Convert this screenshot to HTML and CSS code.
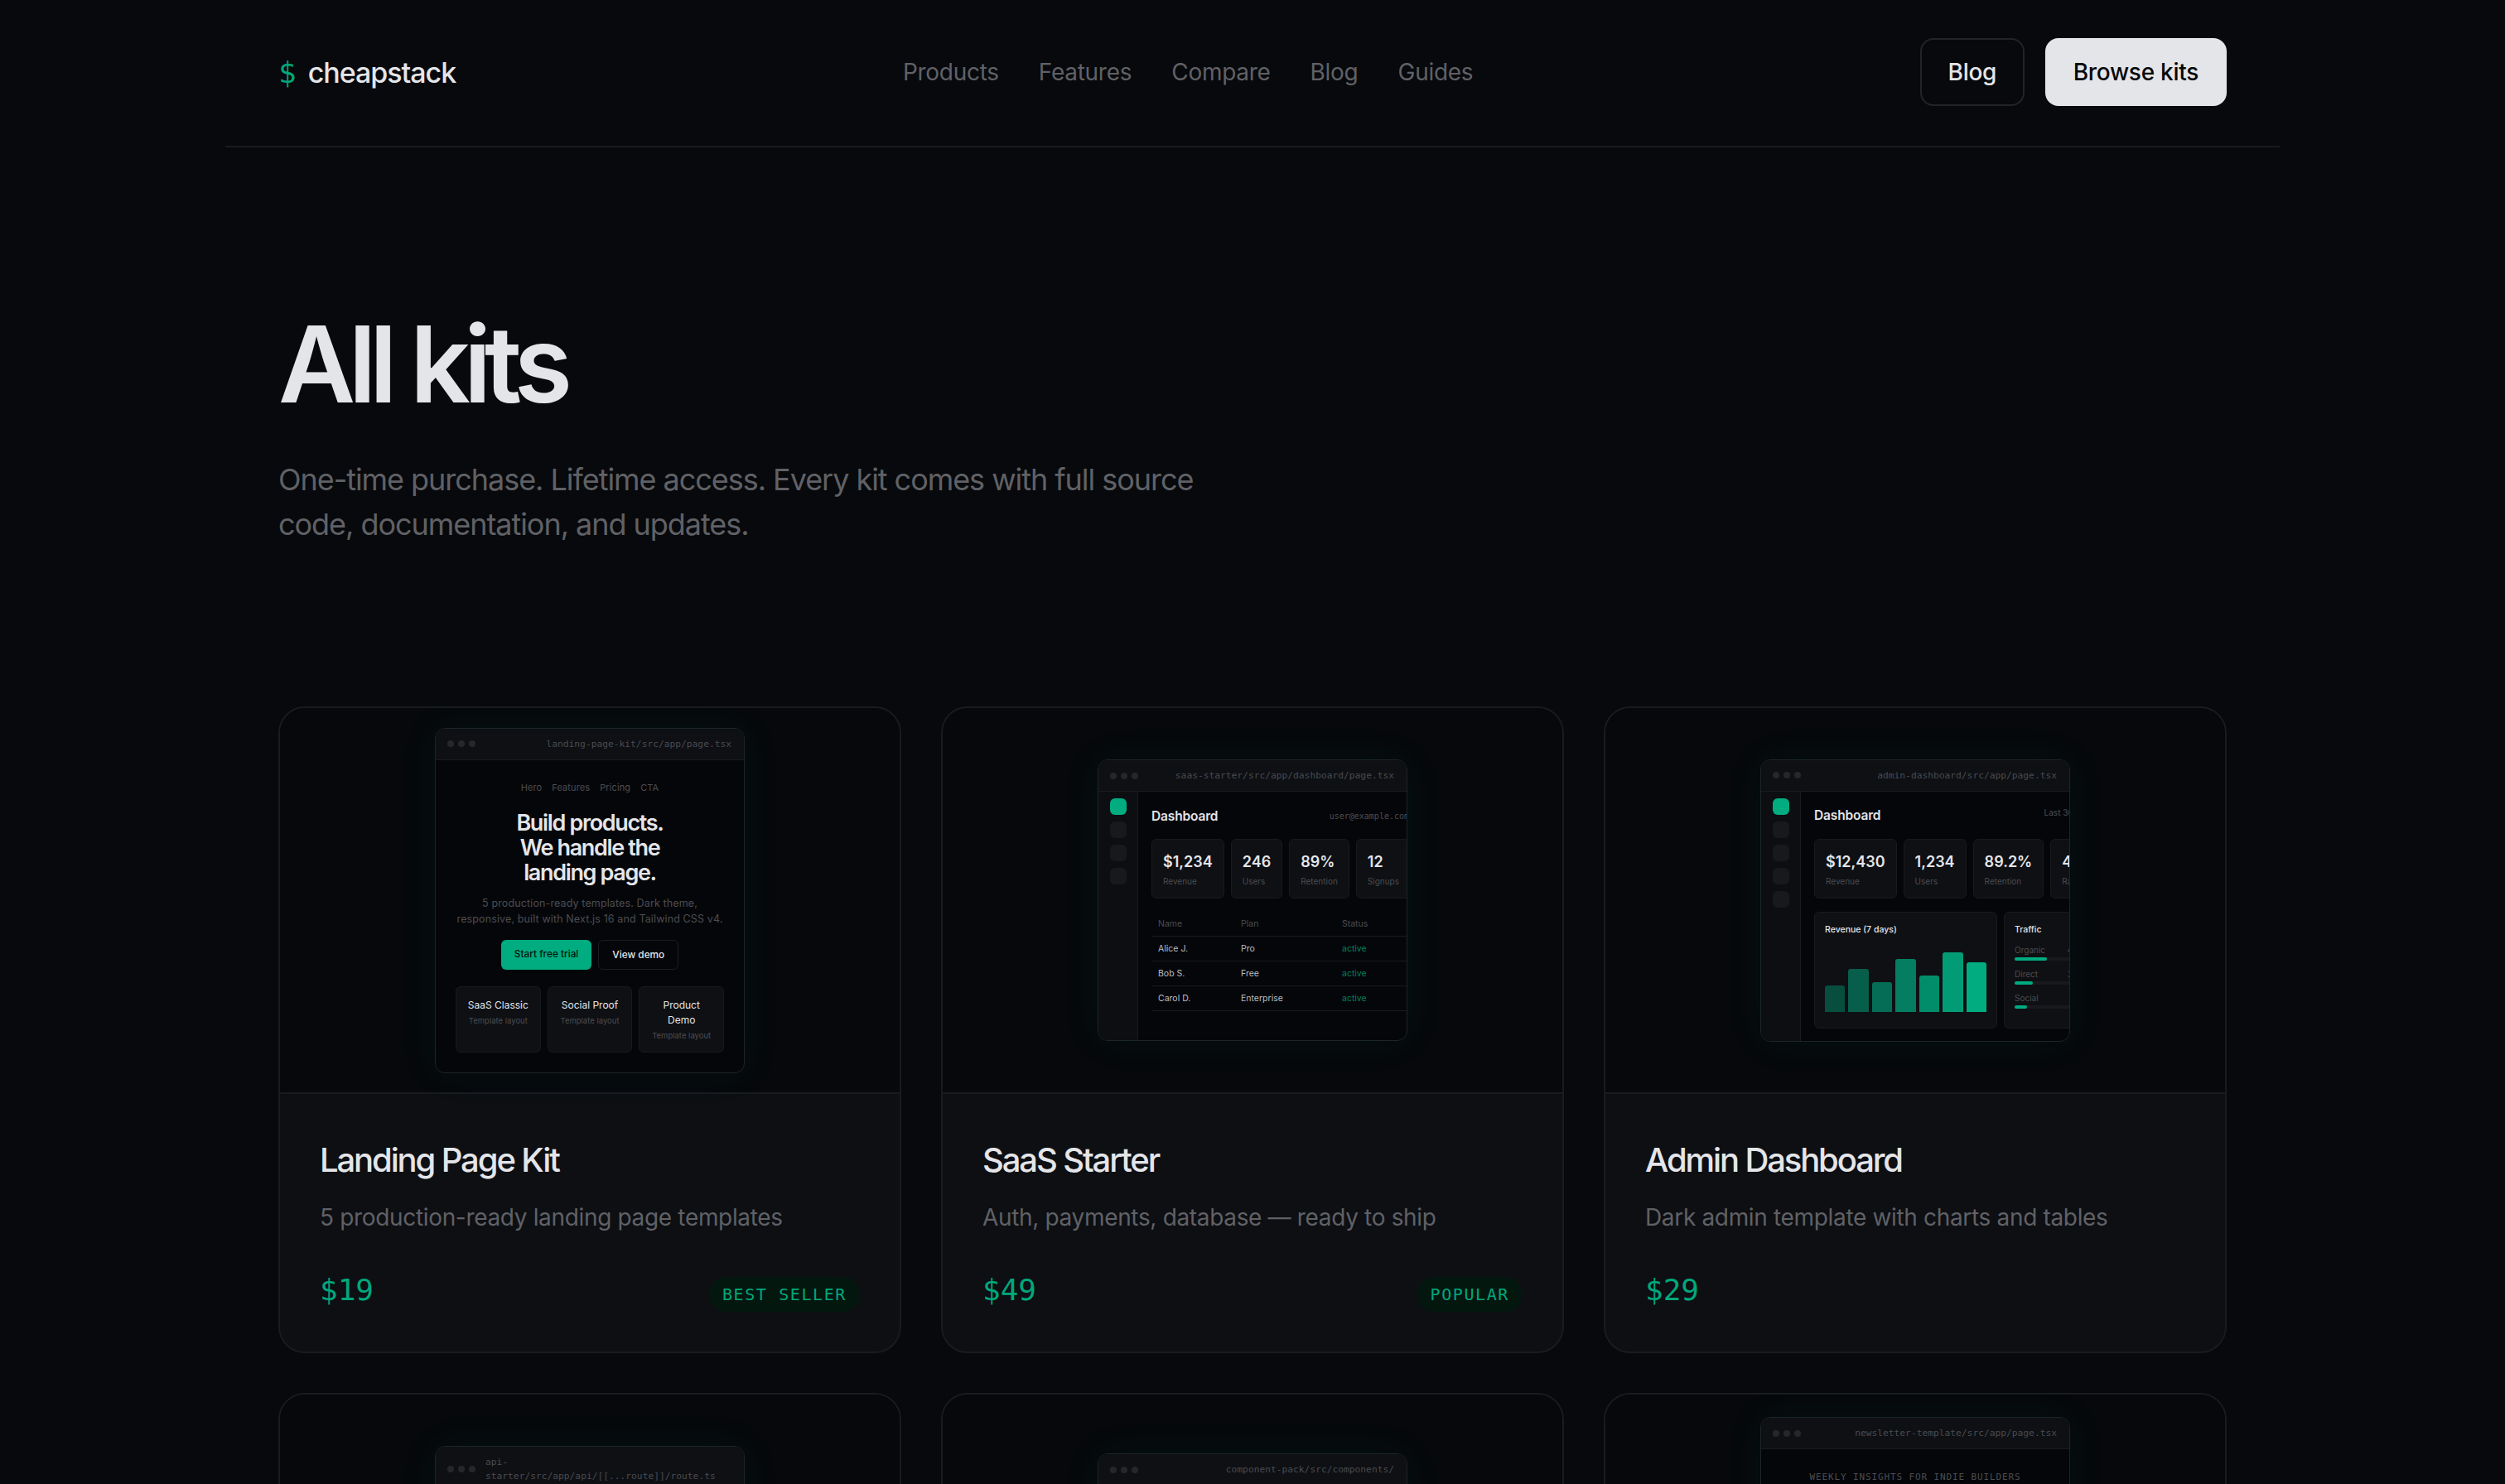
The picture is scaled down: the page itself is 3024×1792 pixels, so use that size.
FILE: index.html
```html
<!DOCTYPE html>
<html lang="en">
   <head>
      <meta charset="UTF-8">
      <title>All kits - cheapstack</title>
      <link rel="stylesheet" href="styles.css">
   </head>
   <body>
      <div class="wrap">
         <header class="top">
            <a class="logo" href="#"><span class="dollar">$</span><span>cheapstack</span></a>
            <nav class="nav">
               <a href="#">Products</a>
               <a href="#">Features</a>
               <a href="#">Compare</a>
               <a href="#">Blog</a>
               <a href="#">Guides</a>
            </nav>
            <div class="actions">
               <a class="btn ghost" href="#">Blog</a>
               <a class="btn solid" href="#">Browse kits</a>
            </div>
         </header>
         <main class="page">
            <h1>All kits</h1>
            <p class="lead">One-time purchase. Lifetime access. Every kit comes with full source code, documentation, and updates.</p>
            <div class="grid">

               <article class="card">
                  <div class="preview">
                     <div class="win">
                        <div class="bar"><div class="dots"><i></i><i></i><i></i></div><span class="path">landing-page-kit/src/app/page.tsx</span></div>
                        <div class="land">
                           <div class="land-nav"><span>Hero</span><span>Features</span><span>Pricing</span><span>CTA</span></div>
                           <div class="land-title">Build products.<br>We handle the<br>landing page.</div>
                           <div class="land-sub">5 production-ready templates. Dark theme, responsive, built with Next.js 16 and Tailwind CSS v4.</div>
                           <div class="land-btns"><span class="mini green">Start free trial</span><span class="mini line">View demo</span></div>
                           <div class="land-cards">
                              <div class="tpl"><b>SaaS Classic</b><small>Template layout</small></div>
                              <div class="tpl"><b>Social Proof</b><small>Template layout</small></div>
                              <div class="tpl"><b>Product Demo</b><small>Template layout</small></div>
                           </div>
                        </div>
                     </div>
                  </div>
                  <div class="info">
                     <h2>Landing Page Kit</h2>
                     <p class="desc">5 production-ready landing page templates</p>
                     <div class="foot"><span class="price">$19</span><span class="badge">BEST SELLER</span></div>
                  </div>
               </article>

               <article class="card">
                  <div class="preview">
                     <div class="win">
                        <div class="bar"><div class="dots"><i></i><i></i><i></i></div><span class="path">saas-starter/src/app/dashboard/page.tsx</span></div>
                        <div class="app saas">
                           <div class="side"><i class="on"></i><i></i><i></i><i></i></div>
                           <div class="main">
                              <div class="main-top"><b>Dashboard</b><span class="user">user@example.com</span></div>
                              <div class="stats">
                                 <div class="stat"><b>$1,234</b><small>Revenue</small></div>
                                 <div class="stat"><b>246</b><small>Users</small></div>
                                 <div class="stat"><b>89%</b><small>Retention</small></div>
                                 <div class="stat"><b>12</b><small>Signups</small></div>
                              </div>
                              <div class="table">
                                 <div class="tr th"><span>Name</span><span>Plan</span><span>Status</span></div>
                                 <div class="tr"><span>Alice J.</span><span>Pro</span><span class="ok">active</span></div>
                                 <div class="tr"><span>Bob S.</span><span>Free</span><span class="ok">active</span></div>
                                 <div class="tr"><span>Carol D.</span><span>Enterprise</span><span class="ok">active</span></div>
                              </div>
                           </div>
                        </div>
                     </div>
                  </div>
                  <div class="info">
                     <h2>SaaS Starter</h2>
                     <p class="desc">Auth, payments, database — ready to ship</p>
                     <div class="foot"><span class="price">$49</span><span class="badge">POPULAR</span></div>
                  </div>
               </article>

               <article class="card">
                  <div class="preview">
                     <div class="win">
                        <div class="bar"><div class="dots"><i></i><i></i><i></i></div><span class="path">admin-dashboard/src/app/page.tsx</span></div>
                        <div class="app admin">
                           <div class="side"><i class="on"></i><i></i><i></i><i></i><i></i></div>
                           <div class="main">
                              <div class="main-top"><b>Dashboard</b><span class="last">Last 30 days</span></div>
                              <div class="stats">
                                 <div class="stat"><b>$12,430</b><small>Revenue</small></div>
                                 <div class="stat"><b>1,234</b><small>Users</small></div>
                                 <div class="stat"><b>89.2%</b><small>Retention</small></div>
                                 <div class="stat"><b>4.9</b><small>Rating</small></div>
                              </div>
                              <div class="panels">
                                 <div class="panel chart">
                                    <div class="panel-title">Revenue (7 days)</div>
                                    <div class="bars">
                                       <i style="height:32px;opacity:.4"></i>
                                       <i style="height:52px;opacity:.5"></i>
                                       <i style="height:36px;opacity:.6"></i>
                                       <i style="height:64px;opacity:.7"></i>
                                       <i style="height:44px;opacity:.8"></i>
                                       <i style="height:72px;opacity:.9"></i>
                                       <i style="height:60px;opacity:1"></i>
                                    </div>
                                 </div>
                                 <div class="panel traffic">
                                    <div class="panel-title">Traffic</div>
                                    <div class="src"><div class="src-row"><span>Organic</span><span>45%</span></div><div class="track"><i style="width:45%"></i></div></div>
                                    <div class="src"><div class="src-row"><span>Direct</span><span>25%</span></div><div class="track"><i style="width:25%"></i></div></div>
                                    <div class="src"><div class="src-row"><span>Social</span><span>18%</span></div><div class="track"><i style="width:18%"></i></div></div>
                                 </div>
                              </div>
                           </div>
                        </div>
                     </div>
                  </div>
                  <div class="info">
                     <h2>Admin Dashboard</h2>
                     <p class="desc">Dark admin template with charts and tables</p>
                     <div class="foot"><span class="price">$29</span></div>
                  </div>
               </article>

               <article class="card">
                  <div class="preview">
                     <div class="win tall-340">
                        <div class="bar"><div class="dots"><i></i><i></i><i></i></div><span class="path">api-starter/src/app/api/[[...route]]/route.ts</span></div>
                     </div>
                  </div>
               </article>

               <article class="card">
                  <div class="preview">
                     <div class="win tall-322">
                        <div class="bar"><div class="dots"><i></i><i></i><i></i></div><span class="path">component-pack/src/components/</span></div>
                     </div>
                  </div>
               </article>

               <article class="card">
                  <div class="preview">
                     <div class="win tall-410">
                        <div class="bar"><div class="dots"><i></i><i></i><i></i></div><span class="path">newsletter-template/src/app/page.tsx</span></div>
                        <div class="news">WEEKLY INSIGHTS FOR INDIE BUILDERS</div>
                     </div>
                  </div>
               </article>

            </div>
         </main>
      </div>
   </body>
</html>
```

FILE: styles.css
```css
*{
   box-sizing:border-box;
}
html,body{
   margin:0;
   padding:0;
   height:100%;
   overflow:hidden;
   background:#07090c;
   color:#e4e5e9;
   font-family:Inter,"Liberation Sans",sans-serif;
}
a{
   color:inherit;
   text-decoration:none;
}
.wrap{
   width:2480px;
   margin:0 auto;
}

/* top bar */
.top{
   display:flex;
   align-items:center;
   justify-content:space-between;
   height:178px;
   padding:0 64px 2px;
   border-bottom:2px solid #1a1b1e;
}
.logo{
   display:flex;
   align-items:center;
   gap:14px;
   font-size:34px;
   font-weight:500;
   letter-spacing:-0.03em;
}
.dollar{
   color:#00a87c;
   font-family:"DejaVu Sans Mono",monospace;
   font-weight:400;
   font-size:36px;
   letter-spacing:0;
}
.nav{
   display:flex;
   gap:48px;
   font-size:28px;
   letter-spacing:-0.01em;
   color:#606166;
}
.actions{
   display:flex;
   gap:25px;
}
.btn{
   display:flex;
   align-items:center;
   height:82px;
   padding:0 34px;
   border-radius:16px;
   font-size:28px;
   font-weight:500;
   letter-spacing:-0.01em;
}
.ghost{
   padding:0 31.5px;
   border:2px solid #232427;
}
.solid{
   background:#e4e5e9;
   color:#07080b;
}

/* heading */
.page{
   padding:0 64px;
}
h1{
   margin:0;
   padding-top:191px;
   font-size:128px;
   line-height:141px;
   font-weight:600;
   letter-spacing:-0.065em;
}
.lead{
   max-width:1152px;
   margin:42px 0 193px;
   font-size:36px;
   line-height:54px;
   letter-spacing:-0.029em;
   color:#606166;
}

/* cards */
.grid{
   display:grid;
   grid-template-columns:repeat(3,752px);
   gap:48px;
}
.card{
   border:2px solid #1a1b1e;
   border-radius:32px;
   background:#0d0f13;
   overflow:hidden;
}
.preview{
   display:flex;
   align-items:center;
   justify-content:center;
   height:466px;
   background:#06080b;
   border-bottom:2px solid #1a1b1e;
}
.info{
   padding:48px 48px 47px;
}
h2{
   margin:0;
   font-size:40px;
   line-height:64px;
   font-weight:500;
   letter-spacing:-0.053em;
}
.desc{
   margin:16px 0 0;
   font-size:28px;
   line-height:42px;
   letter-spacing:-0.012em;
   color:#606166;
}
.foot{
   display:flex;
   align-items:baseline;
   justify-content:space-between;
   margin-top:40px;
   min-height:54px;
}
.price{
   font-family:"DejaVu Sans Mono",monospace;
   font-size:36px;
   line-height:54px;
   color:#00a87c;
}
.badge{
   padding:6px 16px;
   border-radius:21px;
   background:#04170f;
   color:#00a87c;
   font-family:"DejaVu Sans Mono",monospace;
   font-size:20px;
   line-height:30px;
   letter-spacing:0.08em;
}

/* little browser window */
.win{
   width:374px;
   border:1px solid #1d2527;
   border-radius:12px;
   background:#050609;
   overflow:hidden;
   box-shadow:0 0 48px rgba(0,168,124,0.07);
}
.tall-340{
   height:340px;
}
.tall-322{
   height:322px;
}
.tall-410{
   height:410px;
}
.bar{
   display:flex;
   align-items:center;
   justify-content:space-between;
   gap:12px;
   padding:10px 15px 10px 14px;
   background:#0e1014;
   border-bottom:1px solid #1a1b1e;
}
.dots{
   display:flex;
   gap:5px;
   flex:none;
}
.dots i{
   width:8px;
   height:8px;
   border-radius:50%;
   background:#26272b;
}
.path{
   font-family:"DejaVu Sans Mono",monospace;
   font-size:11.25px;
   line-height:17px;
   color:#4a4b50;
}

/* landing page mock */
.land{
   padding:25px 24px 24px;
   text-align:center;
}
.land-nav{
   display:flex;
   justify-content:center;
   gap:12px;
   font-size:11px;
   line-height:16px;
   letter-spacing:0.01em;
   color:#4c4d52;
}
.land-title{
   margin-top:20px;
   font-size:27px;
   line-height:30px;
   font-weight:600;
   letter-spacing:-0.05em;
}
.land-sub{
   margin:12px -2px 0;
   font-size:12.5px;
   line-height:19px;
   letter-spacing:0.01em;
   color:#4c4d52;
}
.land-btns{
   display:flex;
   justify-content:center;
   gap:8px;
   margin-top:16px;
}
.mini{
   display:block;
   height:36px;
   line-height:34px;
   padding:0 16px;
   border-radius:6px;
   font-size:11.8px;
   font-weight:500;
}
.green{
   background:#00ac80;
   color:#04120d;
}
.line{
   border:1px solid #1c1d20;
}
.land-cards{
   display:flex;
   gap:8px;
   margin-top:20px;
}
.tpl{
   flex:1;
   padding:13px 12px 12px;
   border:1px solid #191a1d;
   border-radius:6px;
   background:#0e1014;
}
.tpl b{
   display:block;
   font-size:12px;
   line-height:18px;
   font-weight:400;
}
.tpl small{
   display:block;
   margin:3px -6px 0;
   font-size:9.5px;
   line-height:14px;
   color:#4c4d52;
}

/* dashboard mocks */
.app{
   display:flex;
}
.side{
   display:flex;
   flex-direction:column;
   gap:8px;
   flex:none;
   width:48px;
   padding:8px 0 0 14px;
   background:#0c0e12;
   border-right:1px solid #1a1b1e;
}
.side i{
   width:20px;
   height:20px;
   border-radius:6px;
   background:#18191c;
}
.side .on{
   background:#00ac80;
}
.main{
   flex:1;
   min-width:0;
   padding:17px 0 15px 16px;
   overflow:hidden;
}
.saas .main{
   padding-bottom:35px;
}
.main-top{
   display:flex;
   align-items:center;
   justify-content:space-between;
   height:24px;
   white-space:nowrap;
}
.main-top b{
   font-size:15.5px;
   font-weight:600;
   letter-spacing:-0.01em;
}
.user{
   margin-right:-3px;
   font-family:"DejaVu Sans Mono",monospace;
   font-size:10px;
   color:#4c4d52;
}
.last{
   align-self:flex-start;
   margin-right:-30px;
   font-size:10px;
   line-height:16px;
   color:#4c4d52;
}
.stats{
   display:flex;
   gap:8px;
   margin-top:16px;
}
.stat{
   flex:none;
   height:72px;
   padding:15px 13px 0;
   border:1px solid #191a1d;
   border-radius:6px;
   background:#0e1014;
}
.stat b{
   display:block;
   font-size:18px;
   line-height:24px;
   font-weight:600;
   white-space:nowrap;
}
.stat small{
   display:block;
   margin-top:4px;
   font-size:10px;
   line-height:14px;
   color:#4c4d52;
}
.table{
   margin-top:16px;
}
.tr{
   display:grid;
   grid-template-columns:100px 122px 1fr;
   align-items:center;
   height:30px;
   padding-left:8px;
   border-bottom:1px solid #191a1d;
   font-size:10.5px;
   color:#bcbdc2;
}
.th{
   color:#4c4d52;
}
.ok{
   color:#00805f;
}
.panels{
   display:flex;
   gap:8px;
   margin-top:16px;
}
.panel{
   flex:none;
   height:141px;
   padding:13px 12px 0;
   border:1px solid #191a1d;
   border-radius:6px;
   background:#0e1014;
}
.panel-title{
   font-size:10.5px;
   line-height:16px;
   font-weight:500;
}
.chart{
   width:221px;
}
.bars{
   display:flex;
   align-items:flex-end;
   gap:4px;
   height:90px;
   margin-top:1px;
}
.bars i{
   flex:1;
   border-radius:3px 3px 0 0;
   background:#00ac80;
}
.traffic{
   width:112px;
}
.traffic .panel-title{
   margin-bottom:4px;
}
.src{
   margin-top:9px;
}
.src-row{
   display:flex;
   justify-content:space-between;
   font-size:10px;
   line-height:14px;
   color:#4c4d52;
}
.track{
   height:4px;
   margin-top:2px;
   border-radius:2px;
   background:#18191c;
}
.track i{
   display:block;
   height:100%;
   border-radius:2px;
   background:#00ac80;
}

/* newsletter mock */
.news{
   padding-top:26px;
   text-align:center;
   font-family:"DejaVu Sans Mono",monospace;
   font-size:11px;
   line-height:16px;
   letter-spacing:0.08em;
   white-space:nowrap;
   color:#4c4d52;
}
```
